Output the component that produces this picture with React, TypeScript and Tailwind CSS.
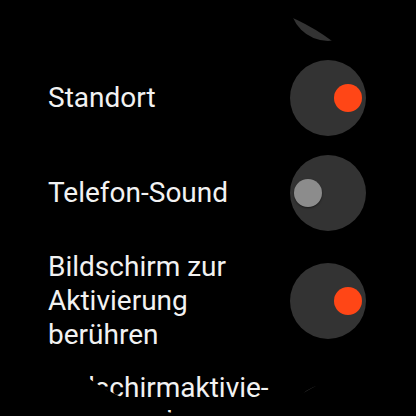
import React from 'react';

type Setting = {
  label: string;
  on: boolean;
};

const settings: Setting[] = [
  { label: 'WLAN', on: true },
  { label: 'Standort', on: true },
  { label: 'Telefon-Sound', on: false },
  { label: 'Bildschirm zur Aktivierung berühren', on: true },
  // manual break, the round screen cuts this row anyway
  { label: 'Bildschirmaktivie-\nrung durch\nNeigen', on: true },
];

const Toggle: React.FC<{ on: boolean }> = ({ on }) => (
  <div
    className={`w-[76px] h-[76px] shrink-0 rounded-full bg-[#333333] flex items-center px-[4px] ${
      on ? 'justify-end' : 'justify-start'
    }`}
  >
    <div
      className={`w-[28px] h-[28px] rounded-full ${
        on ? 'bg-[#ff4616]' : 'bg-[#8c8c8c] shadow-[0_1px_2px_rgba(0,0,0,0.5)]'
      }`}
    />
  </div>
);

const App: React.FC = () => {
  return (
    <div className="w-[416px] h-[416px] bg-black">
      <div className="w-full h-full rounded-full overflow-hidden">
        <div className="flex flex-col gap-[19px] pl-[48px] pr-[50px] mt-[-35px]">
          {settings.map((s) => (
            <div key={s.label} className="flex items-center gap-[14px]">
              <p
                lang="de"
                className="flex-1 whitespace-pre-line font-['Roboto',sans-serif] text-[28px] leading-[34px] text-[#f2f2f2]"
              >
                {s.label}
              </p>
              <Toggle on={s.on} />
            </div>
          ))}
        </div>
      </div>
    </div>
  );
};

export default App;
